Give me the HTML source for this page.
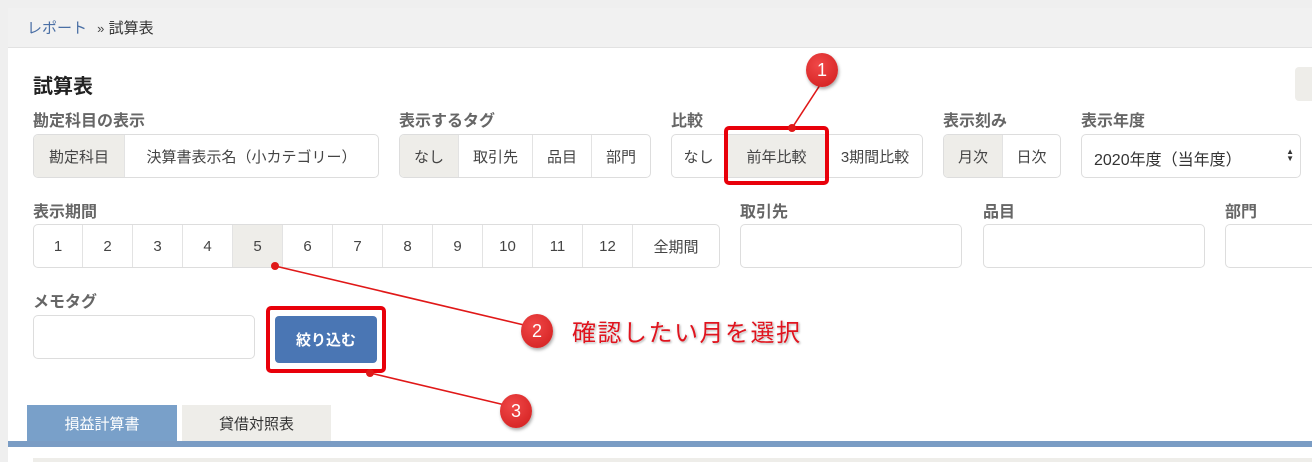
<!DOCTYPE html>
<html><head><meta charset="utf-8"><style>
*{box-sizing:border-box;margin:0;padding:0}
body{width:1312px;height:462px;overflow:hidden;background:#efefef;font-family:"Liberation Sans","Noto Sans CJK JP",sans-serif;position:relative;color:#333}
.a{position:absolute}
.panel{left:8px;top:8px;width:1304px;height:454px;background:#fff}
.bc{left:8px;top:8px;width:1304px;height:40px;background:#f1f1f1;border-bottom:1px solid #e2e2e2}
.lbl{font-size:16px;font-weight:bold;color:#666}
.grp{display:flex;border:1px solid #ddd;border-radius:5px;overflow:hidden;background:#fff;height:44px}
.grp div{display:flex;align-items:center;justify-content:center;font-size:15px;color:#444;border-right:1px solid #e3e3e3}
.grp div:last-child{border-right:none}
.g{background:#eeede9}
.inp{border:1px solid #ddd;border-radius:5px;background:#fff;height:44px}
.circ{width:32px;height:34px;border-radius:50%;background:radial-gradient(circle at 40% 35%,#f04848,#d01c1c);color:#fff;font-size:18px;display:flex;align-items:center;justify-content:center;box-shadow:1px 2px 3px rgba(0,0,0,.35)}
.rb{border:4px solid #e8000a;border-radius:5px}
</style></head><body>
<div class="a panel"></div>
<div class="a bc"></div>
<div class="a" style="left:27px;top:17px;font-size:15px;color:#4a6fa5">レポート <span style="color:#444;font-size:13px;margin-left:6px">»</span> <span style="color:#333">試算表</span></div>
<div class="a" style="left:33px;top:70px;font-size:20px;font-weight:bold;color:#222">試算表</div>
<div class="a" style="left:1295px;top:67px;width:30px;height:34px;background:#eeede9;border-radius:4px"></div>

<div class="a lbl" style="left:33px;top:107px">勘定科目の表示</div>
<div class="a lbl" style="left:399px;top:107px">表示するタグ</div>
<div class="a lbl" style="left:671px;top:107px">比較</div>
<div class="a lbl" style="left:943px;top:107px">表示刻み</div>
<div class="a lbl" style="left:1081px;top:107px">表示年度</div>

<div class="a grp" style="left:33px;top:134px;width:346px"><div class="g" style="width:91px">勘定科目</div><div style="flex:1">決算書表示名（小カテゴリー）</div></div>
<div class="a grp" style="left:399px;top:134px;width:252px"><div class="g" style="width:59px">なし</div><div style="width:74px">取引先</div><div style="width:59px">品目</div><div style="flex:1">部門</div></div>
<div class="a grp" style="left:671px;top:134px;width:252px"><div style="width:54px">なし</div><div class="g" style="width:102px">前年比較</div><div style="flex:1">3期間比較</div></div>
<div class="a grp" style="left:943px;top:134px;width:118px"><div class="g" style="width:59px">月次</div><div style="flex:1">日次</div></div>
<div class="a inp" style="left:1081px;top:134px;width:220px;font-size:16px;color:#333;padding:11px 0 0 12px">2020年度（当年度）<span style="position:absolute;right:6px;top:13px;font-size:8px;line-height:7px">▲<br>▼</span></div>
<div class="a rb" style="left:724px;top:126px;width:105px;height:59px"></div>

<div class="a lbl" style="left:33px;top:198px">表示期間</div>
<div class="a lbl" style="left:740px;top:198px">取引先</div>
<div class="a lbl" style="left:983px;top:198px">品目</div>
<div class="a lbl" style="left:1225px;top:198px">部門</div>
<div class="a grp" style="left:33px;top:224px;width:687px">
<div style="width:49px">1</div><div style="width:50px">2</div><div style="width:50px">3</div><div style="width:50px">4</div><div class="g" style="width:50px">5</div><div style="width:50px">6</div><div style="width:50px">7</div><div style="width:50px">8</div><div style="width:50px">9</div><div style="width:50px">10</div><div style="width:50px">11</div><div style="width:50px">12</div><div style="flex:1">全期間</div></div>
<div class="a inp" style="left:740px;top:224px;width:222px"></div>
<div class="a inp" style="left:983px;top:224px;width:222px"></div>
<div class="a inp" style="left:1225px;top:224px;width:100px"></div>

<div class="a lbl" style="left:33px;top:288px">メモタグ</div>
<div class="a inp" style="left:33px;top:315px;width:222px"></div>
<div class="a" style="left:275px;top:316px;width:102px;height:47px;background:#4a76b4;border-radius:4px;color:#fff;font-weight:bold;font-size:15px;display:flex;align-items:center;justify-content:center">絞り込む</div>
<div class="a rb" style="left:266px;top:306px;width:120px;height:67px"></div>

<svg class="a" style="left:0;top:0" width="1312" height="462">
<g stroke="#e01818" stroke-width="1.6"><line x1="792" y1="128" x2="822" y2="82"/><line x1="275" y1="266" x2="524" y2="325"/><line x1="370" y1="373" x2="505" y2="405"/></g>
<g fill="#e01818"><circle cx="792" cy="128" r="4"/><circle cx="275" cy="266" r="4"/><circle cx="370" cy="373" r="4"/></g>
</svg>
<div class="a circ" style="left:806px;top:53px">1</div>
<div class="a circ" style="left:521px;top:314px">2</div>
<div class="a circ" style="left:500px;top:394px">3</div>
<div class="a" style="left:572px;top:313px;font-size:24px;color:#e0141e;text-shadow:0 0 2px #fff,1px 1px 2px rgba(0,0,0,.4);letter-spacing:1.5px">確認したい月を選択</div>

<div class="a" style="left:27px;top:405px;width:150px;height:37px;background:#79a0c9;color:#fff;font-size:15px;display:flex;align-items:center;justify-content:center">損益計算書</div>
<div class="a" style="left:182px;top:405px;width:149px;height:37px;background:#eeede9;color:#333;font-size:15px;display:flex;align-items:center;justify-content:center">貸借対照表</div>
<div class="a" style="left:8px;top:441px;width:1304px;height:6px;background:#7a9cc4"></div>
<div class="a" style="left:33px;top:458px;width:1279px;height:4px;background:#eeede9"></div>
</body></html>
